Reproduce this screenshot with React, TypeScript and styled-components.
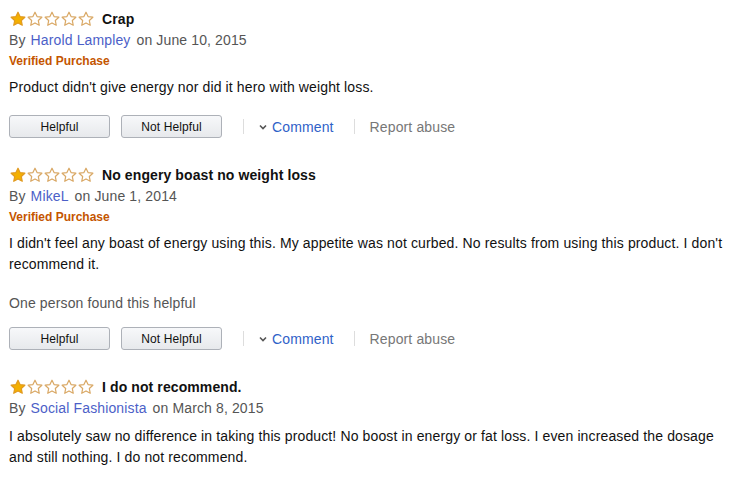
import styled, { createGlobalStyle } from 'styled-components';

const GlobalStyle = createGlobalStyle`
  body {
    margin: 0;
    background: #fff;
    font-family: Arial, "Liberation Sans", sans-serif;
  }
`;

const Page = styled.div`
  width: 718px;
  padding: 9px 0 0 9px;
  letter-spacing: 0.13px;
`;

const Review = styled.div`
  margin-bottom: 27px;
`;

const TitleRow = styled.div`
  display: flex;
  align-items: center;
  height: 19px;
`;

const Stars = styled.div`
  display: flex;
  gap: 1px;
  margin-left: 1px;
  margin-right: 8px;
`;

const Title = styled.span`
  font-size: 14px;
  font-weight: bold;
  color: #111;
  letter-spacing: 0.1px;
`;

const Byline = styled.div`
  font-size: 14px;
  line-height: 21px;
  color: #555;
  margin-top: 2px;
`;

const Name = styled.a`
  color: #4c5fc8;
  margin: 0 6px 0 5px;
  text-decoration: none;
`;

const Verified = styled.div`
  font-size: 12px;
  font-weight: bold;
  color: #c45500;
  line-height: 18px;
  margin-top: 1px;
  letter-spacing: 0;
`;

const Body = styled.p`
  font-size: 14px;
  line-height: 21px;
  color: #111;
  margin: 7px 0 0 0;
`;

const Helpful = styled.div`
  font-size: 14px;
  line-height: 21px;
  color: #555;
  margin-top: 18px;
`;

const Actions = styled.div`
  display: flex;
  align-items: center;
  margin-top: ${(p: { $top: number }) => p.$top}px;
`;

const VoteButton = styled.button`
  width: 101px;
  height: 23px;
  margin-right: 11px;
  padding: 0;
  border: 1px solid #adb1b8;
  border-radius: 3px;
  background: linear-gradient(#f7f8fa, #e7e9ec);
  font-family: inherit;
  font-size: 12px;
  letter-spacing: 0.1px;
  color: #111;
`;

const Divider = styled.span<{ $left: number; $right: number }>`
  width: 1px;
  height: 15px;
  background: #ddd;
  margin: 0 ${(p) => p.$right}px 0 ${(p) => p.$left}px;
`;

const CommentLink = styled.a`
  display: flex;
  align-items: center;
  gap: 5px;
  font-size: 14px;
  color: #2f62c8;
  text-decoration: none;
`;

const Report = styled.a`
  font-size: 14px;
  color: #777;
  text-decoration: none;
`;

const Star = ({ filled }: { filled: boolean }) => (
  <svg width="16" height="16" viewBox="0 0 24 24">
    <path
      d="M12 1.8l3.1 6.6 7.2.9-5.3 5 1.4 7.1L12 17.9l-6.4 3.5 1.4-7.1-5.3-5 7.2-.9z"
      fill={filled ? '#f4b000' : '#fff'}
      stroke={filled ? '#e19a20' : '#d9a865'}
      strokeWidth="1.8"
      strokeLinejoin="round"
    />
  </svg>
);

type ReviewData = {
  title: string;
  name: string;
  date: string;
  verified: boolean;
  text: string;
  helpful?: string;
  actions: boolean;
};

const reviews: ReviewData[] = [
  {
    title: 'Crap',
    name: 'Harold Lampley',
    date: 'June 10, 2015',
    verified: true,
    text: "Product didn't give energy nor did it hero with weight loss.",
    actions: true,
  },
  {
    title: 'No engery boast no weight loss',
    name: 'MikeL',
    date: 'June 1, 2014',
    verified: true,
    text: "I didn't feel any boast of energy using this. My appetite was not curbed. No results from using this product. I don't recommend it.",
    helpful: 'One person found this helpful',
    actions: true,
  },
  {
    title: 'I do not recommend.',
    name: 'Social Fashionista',
    date: 'March 8, 2015',
    verified: false,
    text: 'I absolutely saw no difference in taking this product! No boost in energy or fat loss. I even increased the dosage and still nothing. I do not recommend.',
    actions: false,
  },
];

export default function App() {
  return (
    <>
      <GlobalStyle />
      <Page>
        {reviews.map((r, i) => (
          <Review key={i}>
            <TitleRow>
              <Stars>
                {[0, 1, 2, 3, 4].map((s) => (
                  <Star key={s} filled={s === 0} />
                ))}
              </Stars>
              <Title>{r.title}</Title>
            </TitleRow>
            <Byline>
              By<Name href="#">{r.name}</Name>on {r.date}
            </Byline>
            {r.verified && <Verified>Verified Purchase</Verified>}
            <Body>{r.text}</Body>
            {r.helpful && <Helpful>{r.helpful}</Helpful>}
            {r.actions && (
              <Actions $top={r.helpful ? 13 : 17}>
                <VoteButton>Helpful</VoteButton>
                <VoteButton>Not Helpful</VoteButton>
                <Divider $left={10} $right={15} />
                <CommentLink href="#">
                  <svg width="8" height="6" viewBox="0 0 8 6">
                    <path d="M1 1.5l3 3 3-3" fill="none" stroke="#555" strokeWidth="1.6" />
                  </svg>
                  Comment
                </CommentLink>
                <Divider $left={20} $right={15} />
                <Report href="#">Report abuse</Report>
              </Actions>
            )}
          </Review>
        ))}
      </Page>
    </>
  );
}
